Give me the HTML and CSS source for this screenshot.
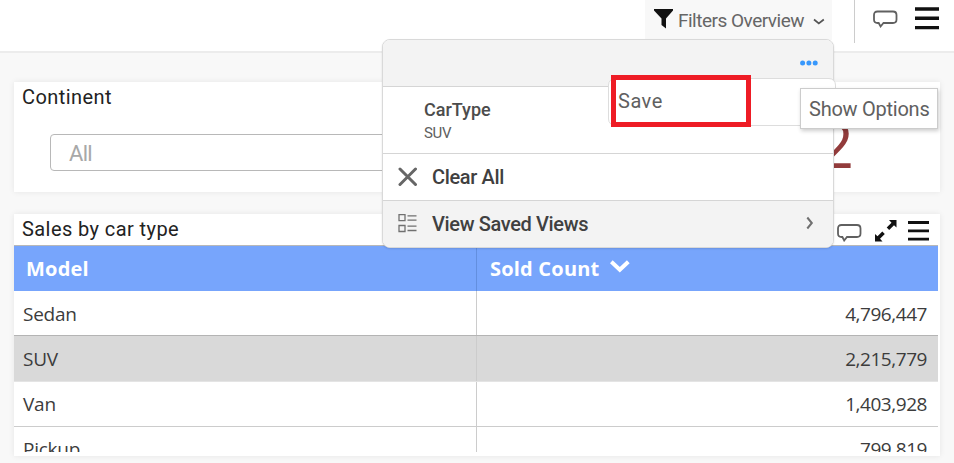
FILE: index.html
```html
<!DOCTYPE html>
<html lang="en">
<head>
<meta charset="utf-8">
<title>Sales Dashboard</title>
<link rel="stylesheet" href="styles.css">
</head>
<body>
<header class="topbar">
  <button class="filter-button">
    <svg class="funnel" width="19" height="20" viewBox="0 0 19 20"><path d="M0 0H19V1.5L12 9.5V19.5L7.5 16V9.5L0 1.5Z" fill="#111"/></svg>
    <span class="filter-label">Filters Overview</span>
    <svg class="chev" width="12" height="8" viewBox="0 0 12 8"><path d="M1 1.5 5.8 5.5 10.8 1.5" fill="none" stroke="#555" stroke-width="1.7"/></svg>
  </button>
  <div class="tools">
    <svg class="comment" width="25" height="19" viewBox="0 0 25 19"><path d="M4.5 1.5H20Q23.5 1.5 23.5 5V9.5Q23.5 13 20 13H10.5L7.6 16.5 5.7 13H4.5Q1 13 1 9.5V5Q1 1.5 4.5 1.5Z" fill="none" stroke="#606060" stroke-width="1.8"/></svg>
    <svg class="burger" width="24" height="23" viewBox="0 0 24 23"><path d="M0 2H24M0 11.3H24M0 20.6H24" stroke="#111" stroke-width="3.4"/></svg>
  </div>
</header>
<main class="board">
  <section class="card filter-card">
    <h2 class="card-title">Continent</h2>
    <div class="select">All</div>
    <div class="metric">2</div>
  </section>
  <section class="card table-card">
    <div class="card-head">
      <h2 class="card-title">Sales by car type</h2>
      <div class="card-tools">
        <svg width="25" height="18" viewBox="0 0 25 18"><path d="M4.5 1H20Q23.5 1 23.5 4.5V9.5Q23.5 13 20 13H10L7.2 16.5 5.4 13H4.5Q1 13 1 9.5V4.5Q1 1 4.5 1Z" fill="none" stroke="#606060" stroke-width="1.8"/></svg>
        <svg class="expand" width="22" height="22" viewBox="0 0 22 22"><path d="M14 0H21.5V7.5L19 5.2 14.2 10 11.7 7.5 16.5 2.7ZM0 14 2.5 16.3 7.3 11.5 9.8 14 5 18.8 7.5 21.5H0Z" fill="#111"/></svg>
        <svg class="card-burger" width="21" height="20" viewBox="0 0 21 20"><path d="M0 1.5H21M0 9.8H21M0 18.2H21" stroke="#111" stroke-width="2.8"/></svg>
      </div>
    </div>
    <div class="table">
      <div class="row head"><div class="cell model">Model</div><div class="cell">Sold Count<svg class="sort" width="20" height="14" viewBox="0 0 20 14"><path d="M1.3 1.8 9.8 9.8 18.3 1.8" fill="none" stroke="#fff" stroke-width="4"/></svg></div></div>
      <div class="row before-selected"><div class="cell model">Sedan</div><div class="cell num">4,796,447</div></div>
      <div class="row selected"><div class="cell model">SUV</div><div class="cell num">2,215,779</div></div>
      <div class="row after-selected"><div class="cell model">Van</div><div class="cell num">1,403,928</div></div>
      <div class="row last"><div class="cell model">Pickup</div><div class="cell num">799,819</div></div>
    </div>
  </section>
</main>
<aside class="panel">
  <div class="panel-top"><svg width="18" height="6" viewBox="0 0 18 6" fill="#3898fc"><circle cx="2.6" cy="3" r="2.5"/><circle cx="8.9" cy="3" r="2.5"/><circle cx="15.2" cy="3" r="2.5"/></svg></div>
  <div class="panel-item"><strong>CarType</strong><small>SUV</small></div>
  <div class="panel-action"><svg class="lead" width="20" height="20" viewBox="0 0 20 20"><path d="M2 2 17.5 17.5M17.5 2 2 17.5" stroke="#666" stroke-width="3" stroke-linecap="round"/></svg><span>Clear All</span></div>
  <div class="panel-action shaded"><svg class="lead" width="20" height="20" viewBox="0 0 20 20"><path d="M1 1.7H7V7.7H1ZM1 12.5H7V18.5H1ZM9.5 2.8H18.5M9.5 7.2H18.5M9.5 13.2H18.5M9.5 17.5H18.5" fill="none" stroke="#707070" stroke-width="1.3"/></svg><span>View Saved Views</span><svg class="go" width="8" height="14" viewBox="0 0 8 14"><path d="M1.3 1.5 5.8 7 1.3 12.5" fill="none" stroke="#707070" stroke-width="2"/></svg></div>
</aside>
<div class="submenu"></div>
<div class="highlight">Save</div>
<div class="tooltip">Show Options</div>
</body>
</html>
```
FILE: styles.css
```css
* { box-sizing: border-box; }
body { margin: 0; width: 954px; height: 463px; overflow: hidden; position: relative; background: #f8f8f8; font-family: Roboto, "Liberation Sans", sans-serif; }
svg { flex: none; display: block; }
.topbar { height: 53px; background: #fff; border-bottom: 2px solid #ececec; display: flex; align-items: flex-start; padding-left: 645px; }
.filter-button { width: 187px; height: 40px; border: 0; background: #f8f8f8; padding: 0 0 0 9px; display: flex; align-items: flex-start; font: 19px/24px Roboto, sans-serif; color: #666; }
.funnel { margin-top: 9px; }
.filter-label { margin: 9px 0 0 5px; width: 127px; white-space: nowrap; text-align: left; letter-spacing: -0.5px; }
.chev { margin: 18px 0 0 8px; }
.tools { margin-left: 22px; height: 43px; border-left: 1px solid #ccc; display: flex; padding-left: 18px; }
.comment { margin-top: 10px; }
.burger { margin: 7px 0 0 17px; }
.board { padding: 29px 14px 0; display: flex; flex-direction: column; gap: 22px; }
.card { background: #fff; box-shadow: 0 0 6px rgba(0,0,0,.08); }
.filter-card { height: 110px; position: relative; }
.card-title { margin: 0; padding: 2px 0 0 8px; font-size: 20px; font-weight: 400; line-height: 26px; letter-spacing: 0.42px; color: #222; }
.select { margin: 24px 0 0 36px; width: 400px; height: 37px; border: 1px solid #b8b8b8; border-radius: 4px; padding: 2px 18px; font-size: 22px; line-height: 34px; letter-spacing: -0.7px; color: #a8a8a8; }
.metric { position: absolute; right: 86px; bottom: 8px; font: 500 64px/80px "Open Sans", sans-serif; color: #923b3b; }
.table-card { height: 242px; }
.card-head { height: 31px; display: flex; justify-content: space-between; }
.card-tools { display: flex; padding: 10px 11px 0 0; }
.expand { margin: -4px 0 0 13px; }
.card-burger { margin: -3px 0 0 11px; }
.table { width: 924px; height: 207px; overflow: hidden; border-top: 1px solid #b8b8b8; font: 19px/26px "Open Sans", "Noto Sans", sans-serif; letter-spacing: -0.45px; color: #3c3c3c; }
.row { display: flex; height: 45px; border-bottom: 1px solid #ccc; }
.row.head { border: 0; background: #77a5fc; color: #fff; font-weight: 700; font-size: 20px; letter-spacing: 0.2px; }
.row.before-selected { border-color: #b4b4b4; }
.row.selected { height: 46px; background: #d9d9d9; border-color: #e4e4e4; }
.cell { flex: 1; padding: 10px 11px 0 13px; display: flex; }
.cell.model { flex: 0 0 463px; padding-left: 9px; border-right: 1px solid #ccc; letter-spacing: -0.25px; }
.after-selected .cell, .last .cell { padding-top: 9px; }
.head .cell.model { padding-left: 12px; border-color: #638fdf; letter-spacing: 0.2px; }
.cell.num { justify-content: flex-end; }
.sort { margin: 4px 0 0 11px; }
.panel { position: absolute; left: 382px; top: 39px; width: 452px; height: 209px; background: #fff; border: 1px solid #d9d9d9; border-radius: 8px; overflow: hidden; box-shadow: 0 1px 2px rgba(0,0,0,.12); }
.panel-top { height: 47px; background: #f3f3f3; border-bottom: 1px solid #d5d5d5; display: flex; justify-content: flex-end; padding: 20px 15px 0 0; }
.panel-item { height: 67px; border-bottom: 1px solid #d5d5d5; padding: 12px 0 0 41px; display: flex; flex-direction: column; color: #4c4c4c; }
.panel-item strong { font-size: 18px; font-weight: 500; line-height: 22px; }
.panel-item small { font-size: 15px; line-height: 24px; letter-spacing: -0.3px; color: #606060; }
.panel-action { height: 46px; display: flex; align-items: center; padding: 0 19px 0 15px; color: #404040; font-size: 20px; font-weight: 500; line-height: 24px; letter-spacing: -0.36px; }
.panel-action span { margin: -1px 0 0 14px; white-space: nowrap; }
.shaded { height: 47px; background: #f3f3f3; border-top: 1px solid #d5d5d5; }
.shaded svg { margin-top: -2px; }
.shaded .go { margin-left: auto; }
.submenu { position: absolute; left: 608px; top: 78px; width: 228px; height: 48px; border: 1px solid #ddd; border-radius: 7px; background: #fff; }
.highlight { position: absolute; left: 611px; top: 75px; width: 140px; height: 52px; border: 5px solid #ee1c25; padding: 8px 0 0 2px; font-size: 20px; line-height: 26px; letter-spacing: 0.5px; color: #606060; }
.tooltip { position: absolute; left: 800px; top: 88px; width: 138px; height: 41px; background: #fff; border: 1px solid #ccc; box-shadow: 1px 2px 4px rgba(0,0,0,.2); padding: 8px 0 0 8px; font-size: 20px; line-height: 24px; letter-spacing: -0.25px; color: #606060; white-space: nowrap; }
```
